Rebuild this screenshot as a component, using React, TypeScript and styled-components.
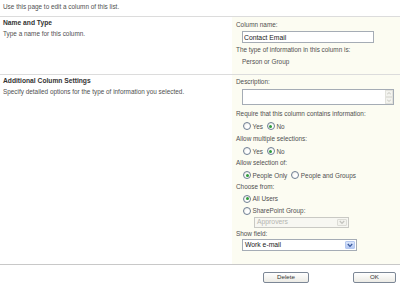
import React from "react";
import styled, { createGlobalStyle } from "styled-components";

const GlobalStyle = createGlobalStyle`
  body {
    margin: 0;
    background: #ffffff;
    font-family: "Liberation Sans", Arial, sans-serif;
    color: #505050;
  }
`;

const Page = styled.div`
  width: 400px;
  height: 288px;
  overflow: hidden;
  font-size: 6.4px;
`;

const Intro = styled.div`
  height: 17px;
  box-sizing: border-box;
  padding: 2px 3px 0;
  line-height: 10px;
  border-bottom: 1px solid #dcdcdc;
`;

const Section = styled.div<{ $last?: boolean }>`
  display: grid;
  grid-template-columns: 232px 1fr;
  border-bottom: 1px solid ${(p) => (p.$last ? "#c8c8c8" : "#dcdcdc")};
`;

const Info = styled.div`
  padding: 1px 3px 0;
  line-height: 10px;
`;

const InfoTitle = styled.div`
  font-weight: bold;
  font-size: 6.7px;
  color: #333333;
  margin-bottom: 1px;
`;

const Panel = styled.div<{ $pt: number; $pb: number }>`
  background: #fcfcf2;
  padding: ${(p) => p.$pt}px 3px ${(p) => p.$pb}px 4px;
  display: flex;
  flex-direction: column;
`;

const Label = styled.div<{ $mt?: number; $lh?: number; $indent?: number }>`
  margin-top: ${(p) => p.$mt ?? 0}px;
  line-height: ${(p) => p.$lh ?? 11}px;
  padding-left: ${(p) => p.$indent ?? 0}px;
  white-space: nowrap;
`;

const TextInput = styled.input`
  box-sizing: border-box;
  margin: 1px 0 0 6px;
  width: 132px;
  height: 12px;
  padding: 0 0 0 1px;
  border: 1px solid #a5acb5;
  background: #ffffff;
  font-family: "Liberation Sans", Arial, sans-serif;
  font-size: 6.8px;
  color: #222222;
  outline: none;
`;

const MultiLine = styled.div`
  box-sizing: border-box;
  margin: 2px 0 0 6px;
  width: 152px;
  height: 16px;
  border: 1px solid #a5acb5;
  background: #ffffff;
  display: flex;
  justify-content: flex-end;
`;

const ScrollBar = styled.div`
  width: 8px;
  display: flex;
  flex-direction: column;
  justify-content: space-between;
  background: #f7f7f5;
`;

const ScrollArrow = styled.div`
  height: 6px;
  display: flex;
  align-items: center;
  justify-content: center;
  border: 1px solid #e2e2dc;
  background: #f3f3ef;
`;

const RadioRow = styled.div<{ $h?: number; $indent?: number }>`
  display: flex;
  align-items: center;
  height: ${(p) => p.$h ?? 12}px;
  padding-left: ${(p) => p.$indent ?? 7}px;
  gap: 4px;
`;

const Option = styled.span`
  display: inline-flex;
  align-items: center;
  gap: 1.5px;
  white-space: nowrap;
`;

const RadioDot = styled.span<{ $checked?: boolean }>`
  position: relative;
  box-sizing: border-box;
  width: 8px;
  height: 8px;
  border-radius: 50%;
  border: 1px solid #6f7f94;
  background: radial-gradient(circle at 65% 65%, #ffffff 30%, #e4e4de 100%);
  &::after {
    content: "";
    display: ${(p) => (p.$checked ? "block" : "none")};
    position: absolute;
    left: 1.5px;
    top: 1.5px;
    width: 3px;
    height: 3px;
    border-radius: 50%;
    background: #2f9d3a;
  }
`;

const SelectBox = styled.div<{ $w: number; $h: number; $ml: number; $disabled?: boolean }>`
  box-sizing: border-box;
  display: flex;
  align-items: center;
  width: ${(p) => p.$w}px;
  height: ${(p) => p.$h}px;
  margin-left: ${(p) => p.$ml}px;
  border: 1px solid ${(p) => (p.$disabled ? "#c9c9c4" : "#a5acb5")};
  background: ${(p) => (p.$disabled ? "#f7f7f2" : "#ffffff")};
  color: ${(p) => (p.$disabled ? "#b5b5b0" : "#1a1a1a")};
  font-size: 6.8px;
  padding: 1px 1px 1px 2px;
`;

const SelectText = styled.span`
  flex: 1;
  line-height: 1;
`;

const DropButton = styled.span<{ $disabled?: boolean }>`
  box-sizing: border-box;
  width: 10px;
  height: 100%;
  display: flex;
  align-items: center;
  justify-content: center;
  border: 1px solid ${(p) => (p.$disabled ? "#dcdcd6" : "#b5c8ef")};
  border-radius: 1px;
  background: ${(p) =>
    p.$disabled ? "#f3f3ee" : "linear-gradient(#dbe6fb, #b4c8f3)"};
`;

const ButtonBar = styled.div`
  display: flex;
  justify-content: flex-end;
  gap: 44px;
  padding: 7px 4px 0 0;
`;

const PushButton = styled.button<{ $w: number }>`
  box-sizing: border-box;
  width: ${(p) => p.$w}px;
  height: 11px;
  padding: 0;
  border: 1px solid #7c8796;
  border-radius: 2px;
  background: linear-gradient(#ffffff, #ecebe5);
  font-family: "Liberation Sans", Arial, sans-serif;
  font-size: 6.2px;
  color: #333333;
  line-height: 1;
`;

const Chevron = ({ color }: { color: string }) => (
  <svg width="6" height="5" viewBox="0 0 6 5">
    <path d="M0.8 1 L3 3.4 L5.2 1" fill="none" stroke={color} strokeWidth="1.3" />
  </svg>
);

const Arrow = ({ up }: { up?: boolean }) => (
  <svg width="4" height="3" viewBox="0 0 4 3">
    <path d={up ? "M0 2.5 L2 0.5 L4 2.5" : "M0 0.5 L2 2.5 L4 0.5"} fill="none" stroke="#b8b8b0" strokeWidth="0.8" />
  </svg>
);

const Radio = ({ label, checked }: { label: string; checked?: boolean }) => (
  <Option>
    <RadioDot $checked={checked} />
    {label}
  </Option>
);

export default function App() {
  return (
    <Page>
      <GlobalStyle />
      <Intro>Use this page to edit a column of this list.</Intro>

      <Section>
        <Info>
          <InfoTitle>Name and Type</InfoTitle>
          <div>Type a name for this column.</div>
        </Info>
        <Panel $pt={2} $pb={7}>
          <Label>Column name:</Label>
          <TextInput defaultValue="Contact Email" readOnly />
          <Label $mt={1}>The type of information in this column is:</Label>
          <Label $indent={6} $mt={1}>Person or Group</Label>
        </Panel>
      </Section>

      <Section $last>
        <Info>
          <InfoTitle>Additional Column Settings</InfoTitle>
          <div>Specify detailed options for the type of information you selected.</div>
        </Info>
        <Panel $pt={1} $pb={13}>
          <Label>Description:</Label>
          <MultiLine>
            <ScrollBar>
              <ScrollArrow>
                <Arrow up />
              </ScrollArrow>
              <ScrollArrow>
                <Arrow />
              </ScrollArrow>
            </ScrollBar>
          </MultiLine>
          <Label $mt={3} $lh={12}>Require that this column contains information:</Label>
          <RadioRow>
            <Radio label="Yes" />
            <Radio label="No" checked />
          </RadioRow>
          <Label $mt={1} $lh={12}>Allow multiple selections:</Label>
          <RadioRow>
            <Radio label="Yes" />
            <Radio label="No" checked />
          </RadioRow>
          <Label $lh={12}>Allow selection of:</Label>
          <RadioRow>
            <Radio label="People Only" checked />
            <Radio label="People and Groups" />
          </RadioRow>
          <Label $lh={12}>Choose from:</Label>
          <RadioRow $h={11}>
            <Radio label="All Users" checked />
          </RadioRow>
          <RadioRow $h={13}>
            <Radio label="SharePoint Group:" />
          </RadioRow>
          <SelectBox $w={95} $h={11} $ml={18} $disabled>
            <SelectText>Approvers</SelectText>
            <DropButton $disabled>
              <Chevron color="#c4c4be" />
            </DropButton>
          </SelectBox>
          <Label $mt={1} $lh={10}>Show field:</Label>
          <SelectBox $w={115} $h={12} $ml={6}>
            <SelectText>Work e-mail</SelectText>
            <DropButton>
              <Chevron color="#3a5a9c" />
            </DropButton>
          </SelectBox>
        </Panel>
      </Section>

      <ButtonBar>
        <PushButton $w={46}>Delete</PushButton>
        <PushButton $w={43}>OK</PushButton>
      </ButtonBar>
    </Page>
  );
}
